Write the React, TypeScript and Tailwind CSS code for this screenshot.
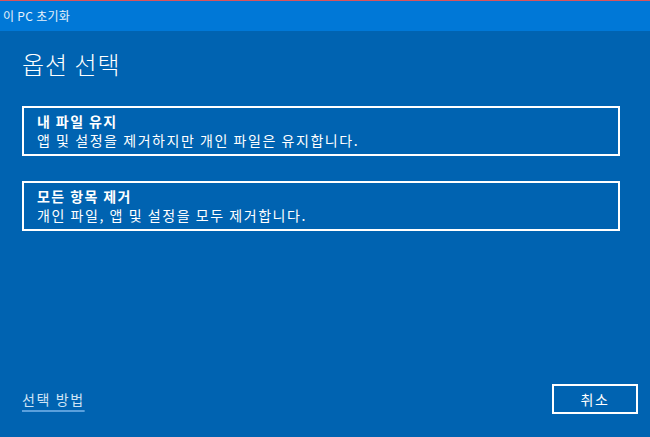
import React from "react";

const font = { fontFamily: "'Noto Sans CJK KR', 'Noto Sans', sans-serif" };

function OptionCard({ title, desc }: { title: string; desc: string }) {
  return (
    <button className="w-[598px] h-[50px] border-2 border-white pl-[13px] text-left text-white flex flex-col justify-center">
      <span className="text-[14px] leading-[19px] font-bold tracking-[1.4px]">{title}</span>
      <span className="text-[14px] leading-[19px] tracking-[1.55px]">{desc}</span>
    </button>
  );
}

export default function App() {
  return (
    <div className="w-[650px] h-[437px] flex flex-col overflow-hidden" style={font}>
      <div className="h-px bg-[#d9545d]" />
      <div className="h-[30px] bg-[#0078d7] flex items-center px-[3px] text-[12px] tracking-[0.3px] text-white/90">
        이 PC 초기화
      </div>
      <div className="flex-1 bg-[#0063b1] flex flex-col pl-[22px] pr-[12px] pb-[23px]">
        <h1 className="mt-[17px] text-[24px] leading-[32px] font-light tracking-[1px] text-white">
          옵션 선택
        </h1>
        <div className="mt-[26px] flex flex-col gap-[25px]">
          <OptionCard
            title="내 파일 유지"
            desc="앱 및 설정을 제거하지만 개인 파일은 유지합니다."
          />
          <OptionCard
            title="모든 항목 제거"
            desc="개인 파일, 앱 및 설정을 모두 제거합니다."
          />
        </div>
        <div className="mt-auto flex items-center justify-between">
          <a className="text-[14px] leading-[19px] tracking-[1.6px] text-[#cfe3f5] underline decoration-[#5aa0dd] decoration-2 underline-offset-[5px] cursor-pointer">
            선택 방법
          </a>
          <button className="w-[86px] h-[30px] border-2 border-white text-[14px] tracking-[1.5px] text-white">
            취소
          </button>
        </div>
      </div>
    </div>
  );
}
